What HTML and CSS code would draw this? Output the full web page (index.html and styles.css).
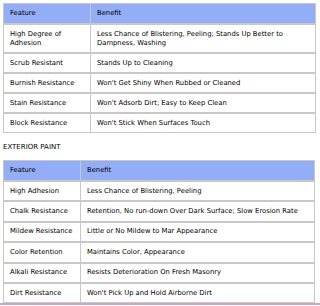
FILE: index.html
```html
<!DOCTYPE html>
<html>
<head>
<meta charset="utf-8">
<link rel="stylesheet" href="styles.css">
</head>
<body>
<div class="page">
  <table class="spec spec-interior">
    <colgroup><col class="c1"><col></colgroup>
    <tr class="head"><td>Feature</td><td>Benefit</td></tr>
    <tr class="tall"><td>High Degree of<br>Adhesion</td><td>Less Chance of Blistering, Peeling; Stands Up Better to<br>Dampness, Washing</td></tr>
    <tr><td>Scrub Resistant</td><td>Stands Up to Cleaning</td></tr>
    <tr><td>Burnish Resistance</td><td>Won't Get Shiny When Rubbed or Cleaned</td></tr>
    <tr><td>Stain Resistance</td><td>Won't Adsorb Dirt; Easy to Keep Clean</td></tr>
    <tr><td>Block Resistance</td><td>Won't Stick When Surfaces Touch</td></tr>
  </table>
  <div class="heading">EXTERIOR PAINT</div>
  <table class="spec spec-exterior">
    <colgroup><col class="c1"><col></colgroup>
    <tr class="head"><td>Feature</td><td>Benefit</td></tr>
    <tr><td>High Adhesion</td><td>Less Chance of Blistering, Peeling</td></tr>
    <tr><td>Chalk Resistance</td><td>Retention, No run-down Over Dark Surface; Slow Erosion Rate</td></tr>
    <tr><td>Mildew Resistance</td><td>Little or No Mildew to Mar Appearance</td></tr>
    <tr><td>Color Retention</td><td>Maintains Color, Appearance</td></tr>
    <tr><td>Alkali Resistance</td><td>Resists Deterioration On Fresh Masonry</td></tr>
    <tr><td>Dirt Resistance</td><td>Won't Pick Up and Hold Airborne Dirt</td></tr>
  </table>
</div>
<div class="bottom-line"></div>
</body>
</html>
```
FILE: styles.css
```css
html, body {
  margin: 0;
  padding: 0;
  background: #fff;
}
body {
  width: 320px;
  height: 306px;
  overflow: hidden;
  position: relative;
  font-family: "DejaVu Sans", Verdana, sans-serif;
  font-size: 6.8px;
  color: #000;
}
.page {
  padding: 3px 4px 0 3px;
}
.spec {
  border-collapse: collapse;
  border: 1px solid #c8c8c8;
  table-layout: fixed;
}
.spec td {
  border: 1px solid #c8c8c8;
  border-top-width: 2px;
  padding: 0 6px;
  height: 18px;
  vertical-align: middle;
  line-height: 9px;
  white-space: nowrap;
}
.spec .head td {
  background: #93adf7;
  border-top-width: 1px;
  height: 19px;
}
.spec .tall td {
  height: 27px;
}
.spec-interior {
  width: 313px;
}
.spec-interior .c1 {
  width: 87px;
}
.spec-exterior {
  width: 312px;
}
.spec-exterior .c1 {
  width: 77px;
}
.spec-exterior td {
  height: 18.4px;
}
.heading {
  height: 27px;
  line-height: 29px;
  font-size: 7px;
}
.bottom-line {
  position: absolute;
  left: 0;
  right: 0;
  top: 303px;
  height: 2px;
  background: #c9a7c9;
}
```
